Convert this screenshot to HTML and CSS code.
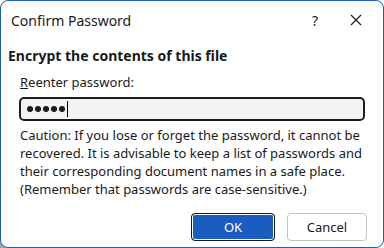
FILE: index.html
```html
<!DOCTYPE html>
<html>
<head>
<meta charset="utf-8">
<link rel="stylesheet" href="styles.css">
</head>
<body>
<div class="window">
  <div class="titlebar">
    <div class="title">Confirm Password</div>
    <div class="help">?</div>
    <div class="close">
      <svg width="12" height="12" viewBox="0 0 12 12"><path d="M1 1L11 11M11 1L1 11" stroke="#1a1a1a" stroke-width="1.1" fill="none"/></svg>
    </div>
  </div>
  <div class="content">
    <div class="heading">Encrypt the contents of this file</div>
    <div class="label"><u>R</u>eenter password:</div>
    <div class="input"><span class="dot"></span><span class="dot"></span><span class="dot"></span><span class="dot"></span><span class="dot"></span><span class="caret"></span></div>
    <div class="caution">Caution: If you lose or forget the password, it cannot be<br>recovered. It is advisable to keep a list of passwords and<br>their corresponding document names in a safe place.<br>(Remember that passwords are case-sensitive.)</div>
    <div class="buttons">
      <div class="btn ok">OK</div>
      <div class="btn cancel">Cancel</div>
    </div>
  </div>
</div>
</body>
</html>
```
FILE: styles.css
```css
html, body { margin: 0; padding: 0; }
html { background: linear-gradient(#fff, #fff) top left / 100% 50% no-repeat, linear-gradient(to right, #a0a0a0 50%, #fff 50%); }
body { width: 384px; height: 248px; overflow: hidden; font-family: "Noto Sans", "Open Sans", sans-serif; color: #1a1a1a; }
.window {
  box-sizing: border-box;
  width: 384px; height: 248px;
  background: #ffffff;
  border: 1px solid #1f5fc0;
  border-radius: 8px;
}
.titlebar { display: flex; align-items: center; height: 38px; }
.title { font-size: 14px; margin-left: 10px; flex: 1; }
.help { font-size: 14px; width: 20px; margin-right: 25px; text-align: center; }
.close { width: 12px; height: 12px; margin-right: 21px; display: flex; }
.content { padding: 0 0 0 7px; }
.heading { font-size: 14px; font-weight: bold; margin-top: 8px; line-height: 18px; }
.label { font-size: 13px; margin-left: 12px; margin-top: 9px; line-height: 16px; }
.input {
  box-sizing: border-box;
  margin: 7px 0 0 11px; width: 346px; height: 24px;
  border: 2px solid #1c1c1c; border-radius: 5px; background: #f3f3f3;
  display: flex; align-items: center; padding-left: 6px; gap: 2px;
}
.dot { width: 6px; height: 6px; border-radius: 50%; background: #1a1a1a; }
.caret { width: 1px; height: 16px; background: #000; margin-left: 0; }
.caution { font-size: 13px; line-height: 18px; margin: 5px 0 0 12px; }
.buttons { display: flex; justify-content: flex-end; gap: 12px; margin-top: 15px; margin-right: 16px; }
.btn { box-sizing: border-box; height: 28px; display: flex; align-items: center; justify-content: center; font-size: 13px; border-radius: 4px; }
.ok { width: 84px; background: #1a5cbf; color: #fff; border: 1px solid #1a1a1a; box-shadow: inset 0 0 0 1px #fff; }
.cancel { width: 80px; background: #fff; border: 1px solid #c4c4c4; }
```
